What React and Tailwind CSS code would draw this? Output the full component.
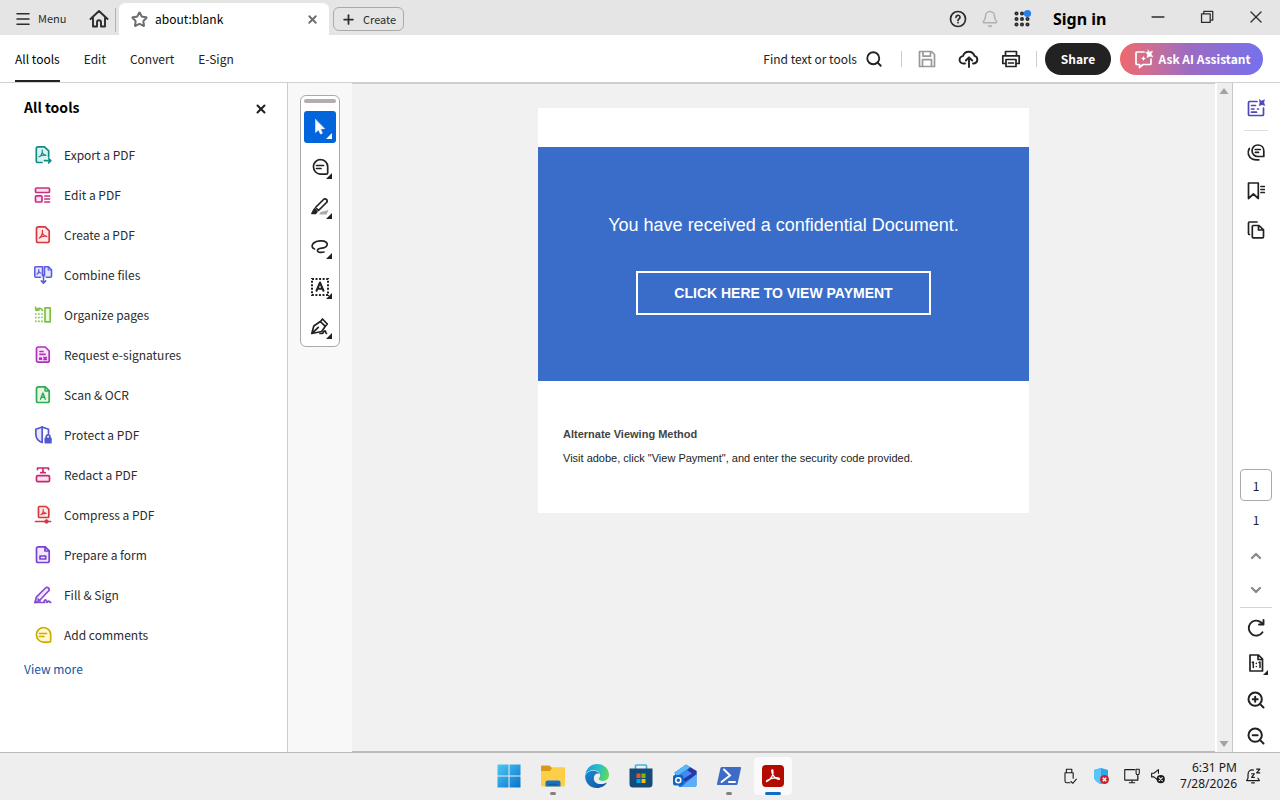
import React, { useState } from 'react';
import { Bell, ChevronDown, ChevronUp, Menu, Minus, Plus, Search, Star, X, ZoomIn, ZoomOut } from 'lucide-react';

// Shared wrapper for the hand drawn icons, all on a 22px grid
const Icon = ({ children, className = 'size-[22px]', width = 1.7, fill = 'none' }) => (
  <svg
    viewBox="0 0 22 22"
    className={`shrink-0 ${className}`}
    fill={fill}
    stroke="currentColor"
    strokeWidth={width}
    strokeLinecap="round"
    strokeLinejoin="round"
    aria-hidden="true"
  >
    {children}
  </svg>
);

const ExportIcon = () => (
  <Icon>
    <path d="M10 18.5H6a1.7 1.7 0 0 1-1.7-1.7V4.5A1.7 1.7 0 0 1 6 2.800h6.500l4.200 4v6" fill="#d5f3f0" />
    <path d="M7 12.800c1.700-.7 3.500-3.500 3.300-6.600M10.300 8.800c.8 1.400 2 2.300 3.700 2.500M7.500 12.500c2-1.200 4.200-1.500 6.300-1.200" strokeWidth="1.200" />
    <path d="M12.500 16.700h6M16.600 14.500l2.200 2.200-2.200 2.200" />
  </Icon>
);

const EditIcon = () => (
  <Icon>
    <rect x="3.500" y="4" width="14" height="4.500" rx="1" fill="#fde0f0" />
    <rect x="3.500" y="11.800" width="6.500" height="6.200" rx="1" fill="#fde0f0" />
    <path d="M12.800 12h4.700M12.800 15h4.700M12.800 18h4.700" />
  </Icon>
);

const CreateIcon = () => (
  <Icon>
    <path d="M6.200 2.800h7l4 4v10a1.700 1.700 0 0 1-1.700 1.700H6.200a1.700 1.700 0 0 1-1.700-1.700V4.500a1.700 1.700 0 0 1 1.700-1.700z" fill="#ffe9e7" />
    <path d="M7.300 14c1.700-.7 3.500-4 3.200-7.500M10.500 9.500c.8 1.500 2.200 2.500 4.200 2.800M7.800 13.700c2-1.300 4.400-1.700 6.900-1.400" strokeWidth="1.300" />
  </Icon>
);

const CombineIcon = () => (
  <Icon width={1.600}>
    <path d="M8.500 13.200H3.800a1 1 0 0 1-1-1V3.800a1 1 0 0 1 1-1h6.700v9M12.500 11.800v-9h4l3 3v6.400a1 1 0 0 1-1 1h-4.200" fill="#e6e6ff" />
    <path d="M16.200 3v3h3M4.900 10.300c1.100-.7 2.100-2.500 1.900-4.800M6.900 7.500c.4 1 1.100 1.600 2 1.700" strokeWidth="1.200" />
    <path d="M11.500 11v8M9.300 16.900l2.200 2.200 2.200-2.200" />
  </Icon>
);

const OrganizeIcon = () => (
  <Icon>
    <rect x="13" y="3.800" width="5.200" height="14" fill="#eef9dd" />
    <path d="M10.500 6.500c-.5-2-3-3-6-.8M3.500 3.300l.6 3 3-.4" />
    <path d="M3 10h8M3 13.500h8M3 17.300h8" strokeDasharray="1.600 1.500" strokeLinecap="butt" />
  </Icon>
);

const RequestIcon = () => (
  <Icon>
    <path d="M6.200 3h7l4 4v9.500a1.700 1.700 0 0 1-1.700 1.700H6.200a1.700 1.700 0 0 1-1.700-1.700V4.700A1.700 1.700 0 0 1 6.200 3z" fill="#fae3fc" />
    <path d="M8 7.500h3M8 10.300h5M7.800 14h1.500v1.200H7.800zM12 13.300l2.300 2.300M14.300 13.300L12 15.600" />
  </Icon>
);

const ScanIcon = () => (
  <Icon>
    <path d="M6.200 2.800h7l4 4v10a1.700 1.700 0 0 1-1.700 1.700H6.200a1.700 1.700 0 0 1-1.700-1.700V4.500a1.700 1.700 0 0 1 1.700-1.700z" fill="#e2f8e5" />
    <path d="M13 3v4h4M8.500 15.200l2.400-6.200 2.400 6.200M9.300 13.200h3.200" strokeWidth="1.400" />
  </Icon>
);

const ProtectIcon = () => (
  <Icon>
    <path d="M10.200 3v15.500c-4-1.500-6.400-4.500-6.400-8.500V5.300z" fill="#e6e6ff" />
    <path d="M10.200 3l6.300 2.300v4" />
    <rect x="13.300" y="14.300" width="5.600" height="4.300" fill="currentColor" />
    <path d="M14.300 14v-1.300a1.800 1.800 0 0 1 3.600 0V14" />
  </Icon>
);

const RedactIcon = () => (
  <Icon>
    <path d="M5.500 5.500V4h11v1.500M11 4v4.500M8.800 8.700h4.400" />
    <rect x="4.500" y="11.700" width="13" height="6" rx="1.300" fill="#fde0f0" />
  </Icon>
);

const CompressIcon = () => (
  <Icon>
    <path d="M7.500 2.500h6.500l2.800 2.700v7.300a1 1 0 0 1-1 1H7.500a1 1 0 0 1-1-1V3.500a1 1 0 0 1 1-1z" fill="#ffe9e7" />
    <path d="M8.800 10.800c1.200-.6 2.600-2.800 2.400-5.500M11.300 7.500c.6 1.100 1.500 1.700 2.800 1.900M9.200 10.500c1.600-.9 3.200-1.200 4.900-1.100" strokeWidth="1.100" />
    <path d="M3.500 17.500h15" />
    <circle cx="14.500" cy="17.500" r="1.300" fill="currentColor" />
  </Icon>
);

const FormIcon = () => (
  <Icon>
    <path d="M6.200 2.800h7l4 4v10a1.700 1.700 0 0 1-1.700 1.700H6.200a1.700 1.700 0 0 1-1.700-1.700V4.500a1.700 1.700 0 0 1 1.700-1.700z" fill="#efe6ff" />
    <path d="M13 3v4h4M8 12h5.700v3H8z" />
  </Icon>
);

const FillIcon = () => (
  <Icon>
    <path d="M3 18.500l1.300-5.300L13.500 4a2 2 0 0 1 3 0 2 2 0 0 1 0 3l-9 9.500z" fill="#efe6ff" />
    <path d="M3 18.500h9.500c-1.500-2 1.500-3.500 2-1.800.2 1-.5 1.600.5 1.600s1-1.300 1.800-1.300.4 1.300 1.900 1.300M6 15l2 2" />
  </Icon>
);

const CommentIcon = ({ tint = 'none' }) => (
  <Icon>
    <path d="M11 3.500c4.600 0 7.700 3.200 7.700 7.300v5.900a1.500 1.500 0 0 1-1.500 1.500H11a7.400 7.400 0 0 1 0-14.700z" fill={tint} />
    <path d="M7.500 9.500h7M7.500 12.500h4.500" />
  </Icon>
);

const tools = [
  { name: 'Export a PDF', icon: <ExportIcon />, color: 'text-[#138a84]' },
  { name: 'Edit a PDF', icon: <EditIcon />, color: 'text-[#c8307f]' },
  { name: 'Create a PDF', icon: <CreateIcon />, color: 'text-[#d7373f]' },
  { name: 'Combine files', icon: <CombineIcon />, color: 'text-[#5c5ce0]' },
  { name: 'Organize pages', icon: <OrganizeIcon />, color: 'text-[#7cc144]' },
  { name: 'Request e-signatures', icon: <RequestIcon />, color: 'text-[#b130bd]' },
  { name: 'Scan & OCR', icon: <ScanIcon />, color: 'text-[#33a852]' },
  { name: 'Protect a PDF', icon: <ProtectIcon />, color: 'text-[#5258d0]' },
  { name: 'Redact a PDF', icon: <RedactIcon />, color: 'text-[#cb2674]' },
  { name: 'Compress a PDF', icon: <CompressIcon />, color: 'text-[#d7373f]' },
  { name: 'Prepare a form', icon: <FormIcon />, color: 'text-[#7a42d0]' },
  { name: 'Fill & Sign', icon: <FillIcon />, color: 'text-[#864ccc]' },
  { name: 'Add comments', icon: <CommentIcon tint="#fff8d6" />, color: 'text-[#ccae00]' },
];

const TitleBar = () => (
  <header className="flex h-[35px] shrink-0 items-center bg-[#e5e5e5] text-[#2c2c2c]">
    <button className="ml-[14px] mt-0.5 flex items-center gap-1.5 text-[11px]">
      <Menu className="size-[18px]" strokeWidth={2} />
      <span className="w-8 text-left">Menu</span>
    </button>
    <button aria-label="Home" className="ml-[18px] mt-0.5">
      <Icon width={1.900}>
        <path d="M2.500 11L11 3l8.500 8M5 9.500v9h4v-4.300a2 2 0 0 1 4 0v4.300h4v-9" />
      </Icon>
    </button>
    <div className="ml-[5px] mt-1 h-6 w-px bg-[#b4b4b4]" />
    <div className="ml-[3px] flex h-8 w-[210px] items-center self-end rounded-t-md bg-white pl-3 pr-2.5 text-black">
      <Star className="size-[17px] text-[#6e6e6e]" strokeWidth={2.800} />
      <span className="ml-[7px] grow text-xs">about:blank</span>
      <button aria-label="Close tab">
        <X className="size-[13px] text-[#6e6e6e]" strokeWidth={3.500} />
      </button>
    </div>
    <button className="ml-1 mt-[3px] flex h-6 w-[71px] items-center gap-[7px] rounded-md border border-[#aaa] pl-[7px] text-[11px]">
      <Plus className="size-[15px]" strokeWidth={2.800} />
      Create
    </button>

    <div className="ml-auto mt-[3px] flex items-center gap-2.5">
      <button aria-label="Help">
        <Icon width={1.700}>
          <circle cx="11" cy="11" r="7.500" />
          <path d="M9 9.300a2 2 0 1 1 3 1.700c-.7.400-1 .8-1 1.500M11 14.600v.1" />
        </Icon>
      </button>
      <button aria-label="Notifications" className="flex w-[22px] justify-center">
        <Bell className="size-[18px] text-[#b0b0b0]" />
      </button>
      <button aria-label="Apps">
        <Icon>
          {[5.500, 11, 16.500].map((y) =>
            [5.500, 11, 16.500].map((x) => <circle key={`${x}-${y}`} cx={x} cy={y} r="1.200" strokeWidth="1.700" />)
          )}
          <circle cx="16.500" cy="5.500" r="3.600" fill="#2680eb" stroke="none" />
        </Icon>
      </button>
    </div>
    <button className="ml-5 mt-0.5 w-14 whitespace-nowrap text-left font-['Noto_Sans',sans-serif] text-base font-bold text-black">
      Sign in
    </button>
    <div className="mb-0.5 ml-6 flex items-center">
      <button aria-label="Minimize" className="flex w-[49px] justify-center">
        <Minus className="size-5" strokeWidth={2} />
      </button>
      <button aria-label="Restore" className="flex w-[49px] justify-center">
        <Icon width={1.400} className="size-5">
          <path d="M5 7.500h9.500V17H5zM7.500 7V4.700h9.800v9.800H15" />
        </Icon>
      </button>
      <button aria-label="Close" className="flex w-[49px] justify-center">
        <X className="size-5" strokeWidth={1.600} />
      </button>
    </div>
  </header>
);

const Toolbar = () => {
  const [active, setActive] = useState('All tools');

  return (
    <div className="flex h-12 shrink-0 items-center border-b border-[#d0d0d0] bg-white pl-[15px] pr-[17px] text-[#222]">
      <nav className="flex h-full gap-6 text-xs">
        {['All tools', 'Edit', 'Convert', 'E-Sign'].map((tab) => (
          <button
            key={tab}
            onClick={() => setActive(tab)}
            className={`whitespace-nowrap border-b-2 pt-0.5 ${active === tab ? 'border-[#222] text-black' : 'border-transparent'}`}
          >
            {tab}
          </button>
        ))}
      </nav>
      <button className="ml-auto flex items-center gap-2 whitespace-nowrap text-xs">
        Find text or tools
        <Search className="size-[18px]" strokeWidth={2.400} />
      </button>
      <div className="ml-[18px] h-4 w-px bg-[#ccc]" />
      <button aria-label="Save" className="ml-3.5 text-[#999]">
        <Icon width={1.700}>
          <path d="M3.500 3.500h12l3 3v12h-15zM7 3.500v4.700h7.500V3.500M6.500 18.500v-6.800h9v6.800" />
        </Icon>
      </button>
      <button aria-label="Upload to cloud" className="ml-5">
        <Icon width={1.900}>
          <path d="M7 15.500H5.500a3.700 3.700 0 0 1-.5-7.400 6 6 0 0 1 11.500-.2 3.900 3.900 0 0 1-.5 7.600h-1M11 19V10M7.800 12.500L11 9.300l3.200 3.200" />
        </Icon>
      </button>
      <button aria-label="Print" className="ml-5">
        <Icon width={1.700}>
          <path d="M5.500 7V3.500h11V7M5 15.500H2.800V7.800h16.400v7.700H17M6 11.500h10v7H6zM8.500 15h5" />
        </Icon>
      </button>
      <div className="ml-3.5 h-4 w-px bg-[#ccc]" />
      <button className="ml-2 h-8 w-[66px] rounded-full bg-[#222] text-xs font-bold text-white">Share</button>
      <button className="ml-[9px] flex h-8 w-[143px] items-center justify-center gap-1 whitespace-nowrap rounded-full bg-linear-to-r from-[#f0686a] via-[#9a6bc4] via-50% to-[#7570ee] text-xs font-bold text-white">
        <Icon width={1.700}>
          <path d="M11 4H4a1 1 0 0 0-1 1v10.500a1 1 0 0 0 1 1h2.500V19.500l3.500-3h7a1 1 0 0 0 1-1V11" />
          <path d="M10.500 8l.8 1.700 1.700.8-1.700.8-.8 1.700-.8-1.700L8 10.500l1.700-.8z" fill="currentColor" stroke="none" />
          <path d="M15 2l1 2.200L19.500 3l-1.300 3.300L20 9l-3-.7L14 9.500l.5-3.200L12.500 4l2.500.2z" fill="currentColor" strokeWidth=".5" />
        </Icon>
        Ask AI Assistant
      </button>
    </div>
  );
};

const ToolsPanel = () => (
  <aside className="flex w-72 shrink-0 flex-col border-r border-[#ccc] bg-white">
    <div className="flex h-12 items-center justify-between pl-6 pr-[19px]">
      <h2 className="text-sm font-bold text-black">All tools</h2>
      <button aria-label="Close panel" className="mt-1">
        <X className="size-[14px] text-[#222]" strokeWidth={3.500} />
      </button>
    </div>
    <ul className="mt-1">
      {tools.map((tool) => (
        <li key={tool.name}>
          <button className="flex h-10 w-full items-center gap-2.5 pl-8 text-left text-xs text-[#2c2c2c]">
            <span className={tool.color}>{tool.icon}</span>
            {tool.name}
          </button>
        </li>
      ))}
    </ul>
    <a href="#more" className="ml-6 mt-1 self-start text-xs leading-5 text-[#1255a5]">
      View more
    </a>
  </aside>
);

const Corner = () => (
  <svg viewBox="0 0 6 6" className="absolute bottom-1 right-1 size-[6px]" fill="currentColor" aria-hidden="true">
    <path d="M6 0v6H0z" />
  </svg>
);

const quickTools = [
  {
    name: 'Select',
    icon: (
      <Icon>
        <path d="M6.500 3.500v13l3-2.600 2 4.200 2-.9-2-4.200 4-.3z" fill="currentColor" strokeWidth=".5" />
      </Icon>
    ),
  },
  { name: 'Comment', icon: <CommentIcon /> },
  {
    name: 'Highlight',
    icon: (
      <Icon>
        <path d="M11.500 16l8-2-2 4.500H10z" fill="#aaa" stroke="none" />
        <path d="M6.500 11.500l8-8a2 2 0 0 1 3 0 2 2 0 0 1 0 3l-8 8z" fill="#fff" />
        <path d="M5.500 13l2.500 2.500-1.500 2H3z" fill="currentColor" />
      </Icon>
    ),
  },
  {
    name: 'Draw',
    icon: (
      <Icon>
        <path d="M5.500 13c-3-1-3.200-3.800-.8-6 2.800-2.500 9.800-2.800 12.500-.8 2 1.500 1 4.300-1.500 5.300-2.300.9-4.500.3-6.300 1.500-1.500 1-1.200 2.800.6 3.200 1.700.3 3.500.2 5-.2" />
      </Icon>
    ),
  },
  {
    name: 'Add text',
    icon: (
      <Icon>
        <rect x="3" y="3" width="16" height="16" strokeDasharray="2 1.550" strokeLinecap="butt" strokeLinejoin="miter" strokeWidth="2" />
        <path d="M7.200 15.500L11 6.500l3.800 9M8.700 12.700h4.600" strokeWidth="2" strokeLinecap="butt" />
      </Icon>
    ),
  },
  {
    name: 'Sign',
    icon: (
      <Icon>
        <path d="M2.800 17.500l2-7.500 6.500-4.500 5 4.800-3.600 5.200zM11.500 5.500L13.500 3l4.800 5-2 2.300M3 17.300l6.300-6" />
        <path d="M11 17.500h2c1.500 0 1.700-3 3-2.700s.3 2.700 1.500 2.700" />
      </Icon>
    ),
  },
];

const QuickToolbar = () => (
  <div className="w-16 shrink-0 bg-[#f8f8f8] pl-3 pt-3">
    <div className="flex w-10 flex-col items-center gap-2 rounded-md border border-[#aaa] bg-white pb-[3px] pt-[3px]">
      <div className="h-1 w-8 rounded-full bg-[#b5adad]" />
      {quickTools.map((tool, i) => (
        <button
          key={tool.name}
          aria-label={tool.name}
          className={`relative flex size-8 items-center justify-center rounded-[3px] ${i === 0 ? 'bg-[#0265dc] text-white' : 'text-[#222]'}`}
        >
          {tool.icon}
          <Corner />
        </button>
      ))}
    </div>
  </div>
);

const Document = () => (
  <main className="grow overflow-hidden border-b border-t border-b-[#bbb] border-t-[#ccc] bg-[#f1f1f1] pt-6 font-['Liberation_Sans',sans-serif]">
    <article className="mx-auto w-[491px] bg-white pt-[39px]">
      <div className="flex h-[234px] flex-col items-center bg-[#3a6dc9] pt-16 text-white">
        <p className="text-lg">You have received a confidential Document.</p>
        <a
          href="#payment"
          className="mt-8 flex h-11 w-[295px] items-center justify-center border-2 border-white text-sm font-bold"
        >
          CLICK HERE TO VIEW PAYMENT
        </a>
      </div>
      <div className="h-[132px] px-[25px] pt-[41px] text-[11px] leading-6 text-[#222]">
        <h3 className="font-bold text-[#444]">Alternate Viewing Method</h3>
        <p>Visit adobe, click "View Payment", and enter the security code provided.</p>
      </div>
    </article>
  </main>
);

const Scrollbar = () => (
  <div className="ml-0.5 flex w-[15px] shrink-0 flex-col items-center justify-between bg-[#eee] py-1 pr-0.5 text-[#a3a3a3]">
    <svg viewBox="0 0 10 8" className="h-2 w-2.5" fill="currentColor" aria-hidden="true">
      <path d="M5 1l4.500 6h-9z" />
    </svg>
    <svg viewBox="0 0 10 8" className="h-2 w-2.5" fill="currentColor" aria-hidden="true">
      <path d="M5 7L.5 1h9z" />
    </svg>
  </div>
);

const RightRail = () => (
  <aside className="flex w-12 shrink-0 flex-col items-center justify-between border-l border-[#c8c8c8] bg-white pr-px text-[#222]">
    <div className="flex flex-col items-center pt-3.5">
      <button aria-label="AI summary" className="text-[#5048b5]">
        <Icon>
          <path d="M12 4.500H4.500a1 1 0 0 0-1 1v12a1 1 0 0 0 1 1h13a1 1 0 0 0 1-1V11M6.500 8.500h4M6.500 12h2.500M6.500 15.200h5M12.500 12h1" />
          <path d="M14.500 2.500l2 1.500 3-1.300-.7 2.800 1 3-2.800-.8-2.800 1 .6-3z" fill="currentColor" strokeWidth=".5" />
        </Icon>
      </button>
      <div className="mt-[11px] h-px w-6 bg-[#ddd]" />
      <button aria-label="Comments" className="mt-[11px]">
        <Icon>
          <path d="M12.800 3c3.500 0 6 2.500 6 5.800v5.700h-6a5.750 5.750 0 1 1 0-11.500z" />
          <path d="M10.300 7.500h5M10.300 10.300h3.200M4.300 6.500c-2.300 4-1 8.500 3 10.500 1.700.9 4 1 6.500.8" />
        </Icon>
      </button>
      <button aria-label="Bookmarks" className="mt-4">
        <Icon>
          <path d="M3.500 3h9.800v15.500L8.400 14l-4.900 4.500zM16 6.500h3.300M16 9.500h3.300M16 12.500h3.300" />
        </Icon>
      </button>
      <button aria-label="Pages" className="mt-[17px]">
        <Icon>
          <path d="M8.300 6.500h5.700l4.500 4.300v7a1 1 0 0 1-1 1H8.300a1 1 0 0 1-1-1V7.500a1 1 0 0 1 1-1zM13.500 6.700V11H18M4.500 15.500a1 1 0 0 1-1-1V4a1 1 0 0 1 1-1H12" />
        </Icon>
      </button>
    </div>
    <div className="flex flex-col items-center pb-1.5">
      <input
        aria-label="Page number"
        defaultValue="1"
        className="size-8 rounded border border-[#aaa] bg-white text-center text-xs text-[#222]"
      />
      <span className="mt-[9px] text-xs leading-5">1</span>
      <button aria-label="Previous page" className="mt-[18px] text-[#8a8a8a]">
        <ChevronUp className="size-4" strokeWidth={3.500} />
      </button>
      <button aria-label="Next page" className="mt-[18px] text-[#8a8a8a]">
        <ChevronDown className="size-4" strokeWidth={3.500} />
      </button>
      <div className="mt-[9px] h-px w-8 bg-[#d5d5d5]" />
      <button aria-label="Rotate" className="mt-[9px]">
        <Icon width={1.900}>
          <path d="M17.500 15.200A7.500 7.500 0 1 1 16 5.300l1.500 1.500M18.500 3v4.500H14" />
        </Icon>
      </button>
      <button aria-label="Actual size" className="relative mt-[13px]">
        <Icon>
          <path d="M5 3h8.500l4 4v12H5zM13 3.500v4h4" />
          <path d="M7.300 10.500l1-.5v5.500M14 10.500l1-.5v5.500M11.300 11.300v.1M11.300 14.500v.1" strokeWidth="1.500" />
        </Icon>
        <svg viewBox="0 0 5 5" className="absolute -bottom-px -right-px size-[5px]" fill="currentColor" aria-hidden="true">
          <path d="M5 0v5H0z" />
        </svg>
      </button>
      <button aria-label="Zoom in" className="mt-4">
        <ZoomIn className="size-5" strokeWidth={2.400} />
      </button>
      <button aria-label="Zoom out" className="mt-4">
        <ZoomOut className="size-5" strokeWidth={2.400} />
      </button>
    </div>
  </aside>
);

const WindowsLogo = () => (
  <svg viewBox="0 0 24 24" className="size-6" aria-hidden="true">
    <defs>
      <linearGradient id="win" x1="0" y1="0" x2="1" y2="1">
        <stop offset="0" stopColor="#4cc8f7" />
        <stop offset="1" stopColor="#0873c8" />
      </linearGradient>
    </defs>
    <path d="M.5.500h11v11H.500zM12.500.500h11v11h-11zM.5 12.500h11v11H.500zM12.500 12.500h11v11h-11z" fill="url(#win)" />
  </svg>
);

const ExplorerLogo = () => (
  <svg viewBox="0 0 26 24" className="h-6 w-[26px]" aria-hidden="true">
    <path d="M1 2.500a1 1 0 0 1 1-1h7.500l2.300 2.300H24a1 1 0 0 1 1 1V12H1z" fill="#d89a14" />
    <path d="M1 7h9l2.500-3.500H24a1 1 0 0 1 1 1V21a1.500 1.500 0 0 1-1.500 1.500h-21A1.500 1.500 0 0 1 1 21z" fill="#fdcf48" />
    <path d="M5.500 22.500v-4a2 2 0 0 1 2-2h11a2 2 0 0 1 2 2v4z" fill="#1473c4" />
    <path d="M8.500 20.500h9" stroke="#0c5ba3" strokeWidth="1.300" strokeLinecap="round" />
  </svg>
);

const EdgeLogo = () => (
  <svg viewBox="0 0 24 24" className="size-6" aria-hidden="true">
    <defs>
      <linearGradient id="edgeTop" x1="0" y1=".2" x2="1" y2=".4">
        <stop offset="0" stopColor="#2099dd" />
        <stop offset=".55" stopColor="#27bfc8" />
        <stop offset="1" stopColor="#62d957" />
      </linearGradient>
      <linearGradient id="edgeBase" x1="0" y1="0" x2="1" y2="1">
        <stop offset="0" stopColor="#1b8bd6" />
        <stop offset="1" stopColor="#124f9c" />
      </linearGradient>
    </defs>
    <path d="M.3 11C1 4.500 6 0 12.200 0 19 0 24 5 24 10.800c0 3.800-2.700 6.200-6 6.200-3 0-4.700-1.400-4.200-2.400.7-1 1.300-1.600 1.300-3C15 8.500 12 6.300 8.500 6.300 4.500 6.300 1.500 8.300.3 11z" fill="url(#edgeTop)" />
    <path d="M.2 11.500C1.500 8.500 4.500 6.700 8.300 6.700c3 0 5.200 1.400 6.200 3-3-1-5.700 1-5.700 4.500 0 4.300 4.500 7 10 5.500 1-.3 2.500-1 3.200-1.200C20.500 21.500 16.500 24 12 24 5 24-.3 18.500.2 11.500z" fill="url(#edgeBase)" />
  </svg>
);

const StoreLogo = () => (
  <svg viewBox="0 0 24 24" className="size-6" aria-hidden="true">
    <path d="M6.500 5V2a1 1 0 0 1 1-1h9a1 1 0 0 1 1 1v3" fill="none" stroke="#38b6e8" strokeWidth="1.700" />
    <path d="M.5 4.500h23V20a3.500 3.500 0 0 1-3.500 3.500H4A3.500 3.500 0 0 1 .5 20z" fill="#144a78" />
    <path d="M7.500 9.500h4V14h-4z" fill="#f25022" />
    <path d="M12.500 9.500h4V14h-4z" fill="#7fba00" />
    <path d="M7.500 15h4v4h-4z" fill="#00a4ef" />
    <path d="M12.500 15h4v4h-4z" fill="#ffb900" />
  </svg>
);

const OutlookLogo = () => (
  <svg viewBox="0 0 24 24" className="size-6" aria-hidden="true">
    <path d="M1.500 8.500L13 .5 23.500 7v14a2 2 0 0 1-2 2H6z" fill="#2873dc" />
    <path d="M1.500 8.500L13 .5l4.500 3L4 12z" fill="#59b7f3" />
    <path d="M17 3.200L23.500 7v4L12 17.500 7 13z" fill="#2a35a8" />
    <path d="M14 6l5 3.500-9 5.500-3-4z" fill="#3f8df0" />
    <path d="M23.500 10v11a2 2 0 0 1-2 2H8z" fill="#58aef8" />
    <rect x="0" y="11" width="10.500" height="10.500" rx="2" fill="#1066c4" />
    <circle cx="5.300" cy="16.300" r="2.500" fill="none" stroke="#fff" strokeWidth="1.500" />
  </svg>
);

const PowerShellLogo = () => (
  <svg viewBox="0 0 24 24" className="size-6" aria-hidden="true">
    <path d="M5 3h18a1 1 0 0 1 1 1.200l-3.500 16a1.200 1.200 0 0 1-1.200.8H1a1 1 0 0 1-1-1.200l3.500-16A1.500 1.500 0 0 1 5 3z" fill="#3d6bc5" />
    <path d="M7 5.500l6 6-8.500 6.500M12 18h6" fill="none" stroke="#fff" strokeWidth="2" strokeLinecap="round" />
  </svg>
);

const AcrobatLogo = () => (
  <svg viewBox="0 0 24 24" className="size-6" aria-hidden="true">
    <rect x="1" y="1" width="22" height="22" rx="4" fill="#b30b00" />
    <path
      d="M6 17.500c3.500-1.800 7-7 5.900-11-.3-1-1.300-.7-1.200.4.300 3.600 3.500 8 6.800 8.400 1.500.1 1.200-1.400-.3-1.500-3.500-.3-7.800.7-11 2.500-1 .7-1 1.500-.2 1.200z"
      fill="none"
      stroke="#fff"
      strokeWidth="1.300"
    />
  </svg>
);

const apps = [
  { name: 'Start', logo: <WindowsLogo /> },
  { name: 'File Explorer', logo: <ExplorerLogo />, running: true },
  { name: 'Edge', logo: <EdgeLogo /> },
  { name: 'Store', logo: <StoreLogo /> },
  { name: 'Outlook', logo: <OutlookLogo /> },
  { name: 'PowerShell', logo: <PowerShellLogo />, running: true },
  { name: 'Acrobat', logo: <AcrobatLogo />, active: true },
];

const Taskbar = () => (
  <footer className="grid h-12 shrink-0 grid-cols-[1fr_auto_1fr] items-center border-t border-[#bbb] bg-[#eee] pb-px text-[#1a1a1a]">
    <div />
    <div className="flex gap-1.5 pl-px">
      {apps.map((app) => (
        <button
          key={app.name}
          aria-label={app.name}
          className={`relative flex h-[38px] w-[38px] items-center justify-center rounded ${app.active ? 'bg-[#fafafa]' : ''}`}
        >
          {app.logo}
          {app.running && <span className="absolute bottom-0 h-[3px] w-1.5 rounded-full bg-[#85817a]" />}
          {app.active && <span className="absolute bottom-0 h-[3px] w-4 rounded-full bg-[#0f6cc8]" />}
        </button>
      ))}
    </div>
    <div className="flex items-center justify-end pr-[17px]">
      <Icon width={1.200} className="size-5">
        <path d="M7 3.500h6v4H7zM5.500 7.500h9v6M5.500 7.500v9a2 2 0 0 0 2 2H11M12 17l2 2 4-4.500" />
      </Icon>
      <svg viewBox="0 0 20 20" className="ml-3 size-5" aria-hidden="true">
        <path d="M9 2l7 2v6c0 4-3 6.500-7 8-4-1.500-7-4-7-8V4z" fill="#2ba6e8" />
        <path d="M9 2v16c-4-1.500-7-4-7-8V4z" fill="#57c5f7" />
        <circle cx="12.500" cy="13.500" r="4.500" fill="#d0202e" />
        <path d="M10.800 11.800l3.400 3.400M14.200 11.800l-3.400 3.400" stroke="#fff" strokeWidth="1.400" />
      </svg>
      <Icon width={1.200} className="ml-2.5 size-5">
        <path d="M14 4H3v11.500h14.500V11M8 18.500h6M11 15.500v3M15.500 3.500h3.500V8a1.500 1.500 0 0 1-3.500 0zM17.300 9.500v5" />
      </Icon>
      <Icon width={1.200} className="ml-1.5 size-5">
        <path d="M9.500 14.500l-3-2.500H4V8h2.500l5-4v4" />
        <circle cx="14" cy="14.500" r="4.500" fill="currentColor" stroke="none" />
        <path d="M12.300 12.800l3.400 3.400M15.700 12.800l-3.400 3.400" stroke="#fff" />
      </Icon>
      <div className="ml-3 text-right font-['Noto_Sans',sans-serif] text-xs leading-4">
        <div>6:31 PM</div>
        <div>7/28/2026</div>
      </div>
      <Icon width={1.300} className="ml-1.5 size-5">
        <path d="M11.500 4.500c-3.800-.8-6 1.500-6 5v4L4 16h14l-1.500-2.500M9.500 18.500h3M9.500 8.500h3l-3 4h3M15 3.500h3.500l-3.500 4h3.500" />
      </Icon>
    </div>
  </footer>
);

const App = () => (
  <div className="flex h-screen flex-col overflow-hidden bg-white font-['Noto_Sans_CJK_SC',sans-serif]">
    <TitleBar />
    <Toolbar />
    <div className="flex min-h-0 grow">
      <ToolsPanel />
      <QuickToolbar />
      <Document />
      <Scrollbar />
      <RightRail />
    </div>
    <Taskbar />
  </div>
);

export default App;
